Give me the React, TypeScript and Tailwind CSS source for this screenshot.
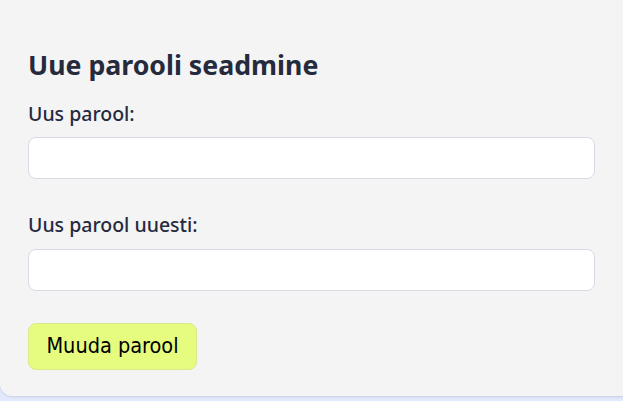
import React from "react";

export default function App() {
  return (
    <div className="h-[401px] w-[623px] overflow-hidden bg-[#e2e9fc]">
      <div
        className="w-[660px] rounded-bl-xl bg-[#f4f4f5] pl-[28px] pt-[49px] pb-[26px] shadow-[0_1px_2px_rgba(120,130,160,0.25)]"
        style={{ fontFamily: '"Noto Sans", "Open Sans", sans-serif' }}
      >
        <h2 className="text-[26.7px] leading-[32px] font-bold text-[#262a3d]">
          Uue parooli seadmine
        </h2>
        <div className="mt-[20px] flex flex-col">
          <label className="text-[19.5px] leading-[26px] font-medium text-[#262a3d]">
            Uus parool:
          </label>
          <input
            type="password"
            className="mt-[10px] h-[42px] w-[567px] rounded-lg border border-[#d9dbe4] bg-white outline-none"
          />
          <label className="mt-[33px] text-[19.5px] leading-[26px] font-medium text-[#262a3d]">
            Uus parool uuesti:
          </label>
          <input
            type="password"
            className="mt-[11px] h-[42px] w-[567px] rounded-lg border border-[#d9dbe4] bg-white outline-none"
          />
        </div>
        <button
          className="mt-[32px] h-[47px] w-[169px] rounded-lg border border-[#d9ea8a] bg-[#e6fc7e] text-[21.5px] text-black"
          style={{ fontFamily: '"DejaVu Sans Condensed", "DejaVu Sans", sans-serif' }}
        >
          Muuda parool
        </button>
      </div>
    </div>
  );
}
